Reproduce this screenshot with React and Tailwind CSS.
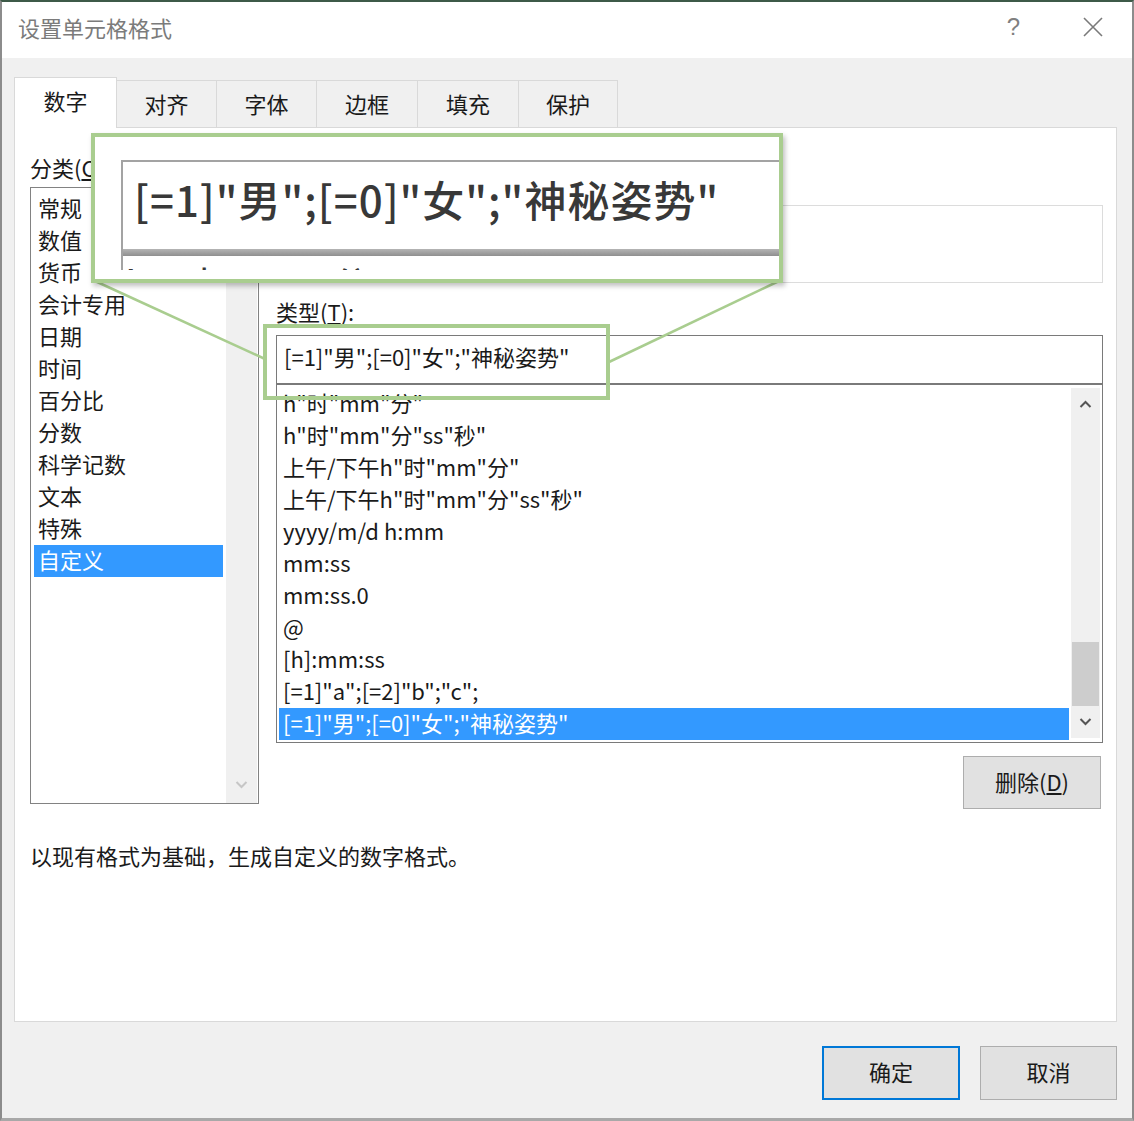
import React from "react";

const categories = [
  "常规",
  "数值",
  "货币",
  "会计专用",
  "日期",
  "时间",
  "百分比",
  "分数",
  "科学记数",
  "文本",
  "特殊",
  "自定义",
];

const formats = [
  'h"时"mm"分"',
  'h"时"mm"分"ss"秒"',
  '上午/下午h"时"mm"分"',
  '上午/下午h"时"mm"分"ss"秒"',
  "yyyy/m/d h:mm",
  "mm:ss",
  "mm:ss.0",
  "@",
  "[h]:mm:ss",
  '[=1]"a";[=2]"b";"c";',
  '[=1]"男";[=0]"女";"神秘姿势"',
];

const tabs = [
  { name: "数字", w: "w-[103px]" },
  { name: "对齐", w: "w-[100px]" },
  { name: "字体", w: "w-[100px]" },
  { name: "边框", w: "w-[101px]" },
  { name: "填充", w: "w-[101px]" },
  { name: "保护", w: "w-[99px]" },
];

const current = '[=1]"男";[=0]"女";"神秘姿势"';

const Chevron = ({ up, className }) => (
  <svg width="13" height="8" viewBox="0 0 13 8" className={className}>
    <polyline
      points={up ? "1.5,7 6.5,2 11.5,7" : "1.5,1 6.5,6 11.5,1"}
      fill="none"
      stroke="currentColor"
      strokeWidth="2"
    />
  </svg>
);

const Key = ({ children }) => <span className="underline underline-offset-2">{children}</span>;

const App = () => {
  return (
    <div
      className="relative w-[1134px] h-[1121px] overflow-hidden bg-[#f0f0f0] border-t-2 border-t-[#3d5a48] border-x-2 border-x-[#8c8c8c] border-b-[3px] border-b-[#a8a8a8] text-[22px] text-[#1a1a1a]"
      style={{ fontFamily: '"Noto Sans CJK SC", "Noto Sans", sans-serif' }}
    >
      {/* title bar */}
      <div className="h-[56px] bg-white flex items-center justify-between pl-[16px] pr-[28px] pb-[6px]">
        <span className="text-[#7b7b7b] leading-none">设置单元格格式</span>
        <div className="flex items-center gap-[62px] text-[#808080]">
          <span className="text-[24px] leading-none" style={{ fontFamily: '"Liberation Sans", sans-serif' }}>?</span>
          <svg width="22" height="22" viewBox="0 0 22 22">
            <path d="M2 2 L20 20 M20 2 L2 20" stroke="#7a7a7a" strokeWidth="1.6" fill="none" />
          </svg>
        </div>
      </div>

      {/* tabs */}
      <div className="flex items-end pl-[12px] pt-[19px]">
        {tabs.map((t, i) =>
          i === 0 ? (
            <div
              key={t.name}
              className={`${t.w} h-[51px] -mb-px relative z-10 bg-white border border-b-0 border-[#d9d9d9] flex items-center justify-center pb-[5px]`}
            >
              {t.name}
            </div>
          ) : (
            <div
              key={t.name}
              className={`${t.w} h-[47px] bg-[#f0f0f0] border border-l-0 border-b-0 border-[#d9d9d9] flex items-center justify-center pb-[2px]`}
            >
              {t.name}
            </div>
          )
        )}
      </div>

      {/* panel */}
      <div className="ml-[12px] w-[1103px] h-[895px] bg-white border border-[#d9d9d9] pl-[15px]">
        <div className="flex gap-[17px]">
          {/* category column */}
          <div className="w-[229px]">
            <div className="mt-[27px] h-[25px] leading-[25px]">
              分类(<Key>C</Key>):
            </div>
            <div className="mt-[7px] h-[617px] border border-[#828282] flex pl-[3px] pr-px gap-[3px]">
              <div className="flex-1 pt-[5px]">
                {categories.map((c, i) => (
                  <div
                    key={c}
                    className={`h-[32px] leading-[28px] pl-[4px] ${
                      i === categories.length - 1 ? "bg-[#3399ff] text-white" : ""
                    }`}
                  >
                    {c}
                  </div>
                ))}
              </div>
              <div className="w-[31px] bg-[#f0f0f0] flex flex-col justify-end items-center pb-[14px]">
                <Chevron className="text-[#c6c6c6]" />
              </div>
            </div>
          </div>

          {/* type column */}
          <div className="w-[827px]">
            <div className="mt-[27px] h-[25px] leading-[25px]">示例</div>
            <div className="mt-[25px] h-[78px] border border-[#dcdcdc]" />
            <div className="mt-[16px] h-[25px] leading-[25px]">
              类型(<Key>T</Key>):
            </div>
            <div className="mt-[11px] h-[49px] border border-[#7a7a7a] flex items-center pl-[7px] pb-[6px]">
              {current}
            </div>
            <div className="h-[359px] border border-[#7a7a7a] flex gap-[2px] pl-[2px] pr-[2px] pt-[3px] pb-[4px]">
              <div className="flex-1">
                {formats.map((f, i) => (
                  <div
                    key={f}
                    className={`h-[32px] leading-[28px] pl-[4px] whitespace-nowrap ${
                      i === formats.length - 1 ? "bg-[#3399ff] text-white" : ""
                    }`}
                  >
                    {f}
                  </div>
                ))}
              </div>
              <div className="w-[29px] bg-[#f0f0f0] flex flex-col items-center">
                <div className="h-[32px] flex items-center justify-center">
                  <Chevron up className="text-[#555]" />
                </div>
                <div className="flex-1 w-full flex flex-col justify-end px-[1px]">
                  <div className="h-[64px] bg-[#cdcdcd]" />
                </div>
                <div className="h-[32px] flex items-center justify-center">
                  <Chevron className="text-[#555]" />
                </div>
              </div>
            </div>
            <div className="flex justify-end pr-[2px] mt-[13px]">
              <div className="w-[138px] h-[53px] bg-[#e1e1e1] border border-[#adadad] flex items-center justify-center pb-[2px]">
                删除(<Key>D</Key>)
              </div>
            </div>
          </div>
        </div>

        <div className="mt-[35px] h-[25px] leading-[23px]">以现有格式为基础，生成自定义的数字格式。</div>
      </div>

      {/* dialog buttons */}
      <div className="flex justify-end gap-[20px] pr-[15px] mt-[24px]">
        <div className="w-[138px] h-[54px] bg-[#e1e1e1] border-2 border-[#0078d7] flex items-center justify-center pb-[4px]">
          确定
        </div>
        <div className="w-[137px] h-[54px] bg-[#e1e1e1] border border-[#adadad] flex items-center justify-center pb-[4px]">
          取消
        </div>
      </div>

      {/* zoom annotation: connector lines and small frame */}
      <svg className="absolute left-0 top-0 pointer-events-none" width="1134" height="1121" viewBox="0 0 1134 1121">
        <line x1="93" y1="279" x2="263" y2="357" stroke="#a9cd8f" strokeWidth="2.5" />
        <line x1="777" y1="279" x2="607" y2="360" stroke="#a9cd8f" strokeWidth="2.5" />
      </svg>
      <div className="absolute left-[261px] top-[322px] w-[347px] h-[76px] border-[4px] border-[#a9cd8f] pointer-events-none" />

      {/* magnified callout */}
      <div className="absolute left-[89px] top-[131px] w-[692px] h-[150px] border-[4px] border-[#a9cd8f] bg-white overflow-hidden shadow-[2px_3px_5px_rgba(0,0,0,0.25)]">
        <div className="pt-[23px] pl-[26px]">
          <div className="border-l-2 border-t-2 border-[#a3a3a3]">
            <div className="h-[87px] flex items-center pl-[11px] pb-[14px] text-[42px] text-[#383838] font-medium whitespace-nowrap tracking-[1px]">
              {current}
            </div>
            <div className="h-[7px] bg-gradient-to-b from-[#b5b5b5] to-[#8f8f8f]" />
            <div className="h-[14px] overflow-hidden pl-[2px]">
              <div className="h-[14px] pt-[8px] text-[42px] leading-[42px] text-[#383838] whitespace-nowrap">
                h"时"mm"分"
              </div>
            </div>
          </div>
        </div>
      </div>
    </div>
  );
};

export default App;
